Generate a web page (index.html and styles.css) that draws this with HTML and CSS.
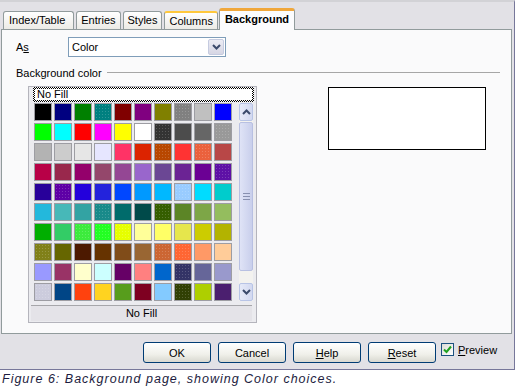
FILE: index.html
```html
<!DOCTYPE html>
<html lang="en">

<head>
    <meta charset="UTF-8">
    <title>Background page</title>
    <link rel="stylesheet" href="styles.css">
</head>

<body>
    <div class="dialog">
        <div class="tabs">
            <div class="tab first">Index/Table</div>
            <div class="tab">Entries</div>
            <div class="tab">Styles</div>
            <div class="tab hover">Columns</div>
            <div class="tab active">Background</div>
        </div>
        <div class="panel">
            <div class="as-row">
                <label class="as-label">A<u>s</u></label>
                <div class="select">
                    <span>Color</span>
                    <span class="drop">
                        <svg width="9" height="6" viewBox="0 0 9 6"><path d="M1 1 L4.5 4.5 L8 1" fill="none" stroke="#3b4a6b" stroke-width="2"/></svg>
                    </span>
                </div>
            </div>
            <div class="section">
                <span>Background color</span>
                <span class="rule"></span>
            </div>
            <div class="color-area">
                <div class="color-box">
                    <div class="no-fill-item">No Fill</div>
                    <div class="grid-wrap">
                        <div class="swatches"></div>
                        <div class="scrollbar">
                            <div class="sb-btn">
                                <svg width="9" height="6" viewBox="0 0 9 6"><path d="M1 5 L4.5 1.5 L8 5" fill="none" stroke="#3b4a6b" stroke-width="2"/></svg>
                            </div>
                            <div class="sb-thumb"><span class="grip"></span></div>
                            <div class="sb-track"></div>
                            <div class="sb-btn">
                                <svg width="9" height="6" viewBox="0 0 9 6"><path d="M1 1 L4.5 4.5 L8 1" fill="none" stroke="#3b4a6b" stroke-width="2"/></svg>
                            </div>
                        </div>
                    </div>
                    <div class="box-footer">No Fill</div>
                </div>
                <div class="preview-box"></div>
            </div>
        </div>
        <div class="buttons">
            <button class="btn">OK</button>
            <button class="btn">Cancel</button>
            <button class="btn"><u>H</u>elp</button>
            <button class="btn"><u>R</u>eset</button>
            <div class="check">
                <span class="box">
                    <svg width="9" height="9" viewBox="0 0 9 9"><path d="M1 4.5 L3.5 7 L8 1.5" fill="none" stroke="#21a121" stroke-width="2"/></svg>
                </span>
                <span><u>P</u>review</span>
            </div>
        </div>
    </div>
    <p class="caption">Figure 6: Background page, showing Color choices.</p>

    <script>
        const colors = [
            "#000000", "#000080", "#008000", "#008080", "#800000", "#800080", "#808000", "#808080", "#c0c0c0", "#0000ff",
            "#00ff00", "#00ffff", "#ff0000", "#ff00ff", "#ffff00", "#ffffff", "#333333", "#4c4c4c", "#666666", "#999999",
            "#b3b3b3", "#cccccc", "#e6e6e6", "#e6e6ff", "#ff3366", "#dc2300", "#b84700", "#ff3333", "#eb613d", "#b84747",
            "#b80047", "#99284c", "#94006b", "#94476b", "#944794", "#9966cc", "#6b4794", "#6b2394", "#6b0094", "#5e11a6",
            "#28009a", "#5e00a6", "#2300dc", "#2323dc", "#0047ff", "#0099ff", "#00b8ff", "#99ccff", "#00dcff", "#00cccc",
            "#23b8dc", "#47b8b8", "#33a3a3", "#198a8a", "#006b6b", "#004a4a", "#355e00", "#5c8526", "#7da647", "#94bd5e",
            "#00ae00", "#33cc66", "#3deb3d", "#23ff23", "#e6ff00", "#ffff99", "#ffff66", "#e6e64c", "#cccc00", "#b3b300",
            "#808019", "#666600", "#4c1900", "#663300", "#804c19", "#996633", "#cc6633", "#ff6633", "#ff9966", "#ffcc99",
            "#9999ff", "#993366", "#ffffcc", "#ccffff", "#660066", "#ff8080", "#0066cc", "#333366", "#666699", "#9999cc",
            "#ccccdd", "#004586", "#ff420e", "#ffd320", "#579d1c", "#7e0021", "#83caff", "#314004", "#aecf00", "#4b1f6f"
        ];
        const dithered = ["#008080", "#808080", "#333333", "#999999", "#b84700", "#eb613d", "#5e11a6", "#5e00a6",
            "#99ccff", "#198a8a", "#355e00", "#3deb3d", "#23ff23", "#e6ff00", "#808019", "#cc6633", "#ff6633",
            "#333366", "#ccccdd", "#314004"];
        const grid = document.querySelector(".swatches");
        colors.forEach(c => {
            const cell = document.createElement("span");
            cell.className = dithered.includes(c) ? "swatch dither" : "swatch";
            cell.style.backgroundColor = c;
            grid.appendChild(cell);
        });
    </script>
</body>

</html>
```

FILE: styles.css
```css
* {
    margin: 0;
    padding: 0;
    box-sizing: border-box;
    font-family: "Liberation Sans", Arial, sans-serif;
}

body {
    width: 520px;
    height: 388px;
    background: #ffffff;
    font-size: 11px;
    color: #000000;
    overflow: hidden;
}

.dialog {
    width: 515px;
    height: 370px;
    background: #e2e1e6;
    border-top: 2px solid #d2d2d6;
    border-right: 1px solid #77779a;
    border-bottom: 1px solid #77779a;
}

/* tabs */
.tabs {
    height: 27px;
    display: flex;
    align-items: flex-end;
    gap: 2px;
    padding-left: 3px;
}

.tab {
    height: 18px;
    padding: 0 4px;
    line-height: 16px;
    border: 1px solid #919b9c;
    border-bottom: none;
    border-radius: 3px 3px 0 0;
    background: linear-gradient(#ffffff, #ecebe6);
}

.tab.first {
    padding: 0 8px 0 5px;
}

.tab.hover {
    border-top: 2px solid #ffc83c;
}

.tab.active {
    position: relative;
    z-index: 1;
    height: 22px;
    margin-bottom: -1px;
    margin-left: -1px;
    padding: 0 5px;
    line-height: 17px;
    font-weight: bold;
    background: #fcfcfe;
    border-top: 3px solid #f0a73c;
}

/* page */
.panel {
    width: 511px;
    height: 305px;
    margin-left: 1px;
    padding: 7px 11px 0 14px;
    background: #fafafb;
    border: 1px solid #919b9c;
}

.as-row {
    display: flex;
    align-items: center;
}

.as-label {
    width: 52px;
}

.select {
    width: 158px;
    height: 20px;
    display: flex;
    align-items: center;
    justify-content: space-between;
    padding: 0 1px 0 3px;
    background: #ffffff;
    border: 1px solid #7f9db9;
}

.drop {
    width: 16px;
    height: 16px;
    display: flex;
    align-items: center;
    justify-content: center;
    background: linear-gradient(#ececf4, #d6d6e4);
    border: 1px solid #c5cbe0;
    border-radius: 2px;
}

.section {
    display: flex;
    align-items: center;
    gap: 5px;
    height: 13px;
    margin-top: 9px;
}

.section .rule {
    flex: 1;
    height: 1px;
    background: #a6a6a6;
}

.color-area {
    display: flex;
    gap: 71px;
    margin-top: 7px;
    margin-left: 12px;
}

.color-box {
    width: 229px;
    height: 237px;
    padding: 0 3px 0 4px;
    background: #ebebef;
    border: 1px solid #b4b4bc;
}

/* focus frame: 1px checker pattern in a 2px border */
.no-fill-item {
    width: 221px;
    height: 15px;
    padding-left: 2px;
    line-height: 11px;
    border: 2px solid transparent;
    background:
        linear-gradient(#ffffff, #ffffff) padding-box,
        repeating-conic-gradient(#000000 0 25%, #ffffff 0 50%) 0 0 / 2px 2px border-box;
}

.grid-wrap {
    display: flex;
    gap: 7px;
    margin-top: 1px;
    padding-left: 1px;
}

.swatches {
    display: grid;
    grid-template-columns: repeat(10, 18px);
    grid-auto-rows: 18px;
    gap: 2px;
}

.swatch {
    border: 1px solid #9d9da3;
}

.swatch.dither {
    background-image: radial-gradient(rgba(255, 255, 255, 0.18) 0.6px, transparent 0.9px);
    background-size: 3px 3px;
}

.scrollbar {
    width: 16px;
    height: 198px;
    display: flex;
    flex-direction: column;
    background: #f3f2ef;
}

.sb-btn {
    height: 18px;
    display: flex;
    align-items: center;
    justify-content: center;
    background: linear-gradient(90deg, #e6eaf8, #d2d8f0);
    border: 1px solid #b8c4e6;
    border-radius: 2px;
}

.sb-thumb {
    height: 149px;
    margin-top: 1px;
    display: flex;
    align-items: center;
    justify-content: center;
    background: linear-gradient(90deg, #dfe3f6, #c9cfec);
    border: 1px solid #b8c0e2;
    border-radius: 2px;
}

.grip {
    width: 7px;
    height: 7px;
    border-top: 1px solid #8890b0;
    border-bottom: 1px solid #8890b0;
    background: linear-gradient(#8890b0, #8890b0) center / 7px 1px no-repeat;
}

.sb-track {
    flex: 1;
}

.box-footer {
    height: 16px;
    margin: 4px 1px 0 -2px;
    line-height: 15px;
    text-align: center;
    border-top: 1px solid #a6a6aa;
    background: #e4e3e8;
}

.preview-box {
    width: 158px;
    height: 63px;
    margin-top: 1px;
    background: #ffffff;
    border: 1px solid #000000;
}

/* buttons */
.buttons {
    display: flex;
    align-items: flex-start;
    gap: 7px;
    padding: 8px 0 0 143px;
}

.btn {
    width: 68px;
    height: 21px;
    font-size: 11px;
    color: #000000;
    background: linear-gradient(#ffffff, #f0f0ea 60%, #d8d8d0);
    border: 1px solid #003c74;
    border-radius: 3px;
}

.check {
    display: flex;
    align-items: center;
    gap: 4px;
    margin-left: -2px;
    margin-top: 1px;
}

.check .box {
    width: 13px;
    height: 13px;
    display: flex;
    align-items: center;
    justify-content: center;
    background: linear-gradient(135deg, #dcdcd7, #ffffff);
    border: 1px solid #1c5180;
}

.caption {
    padding: 2px 0 0 2px;
    font-size: 12.5px;
    font-style: italic;
    letter-spacing: 1px;
    color: #1c1c40;
}
```
